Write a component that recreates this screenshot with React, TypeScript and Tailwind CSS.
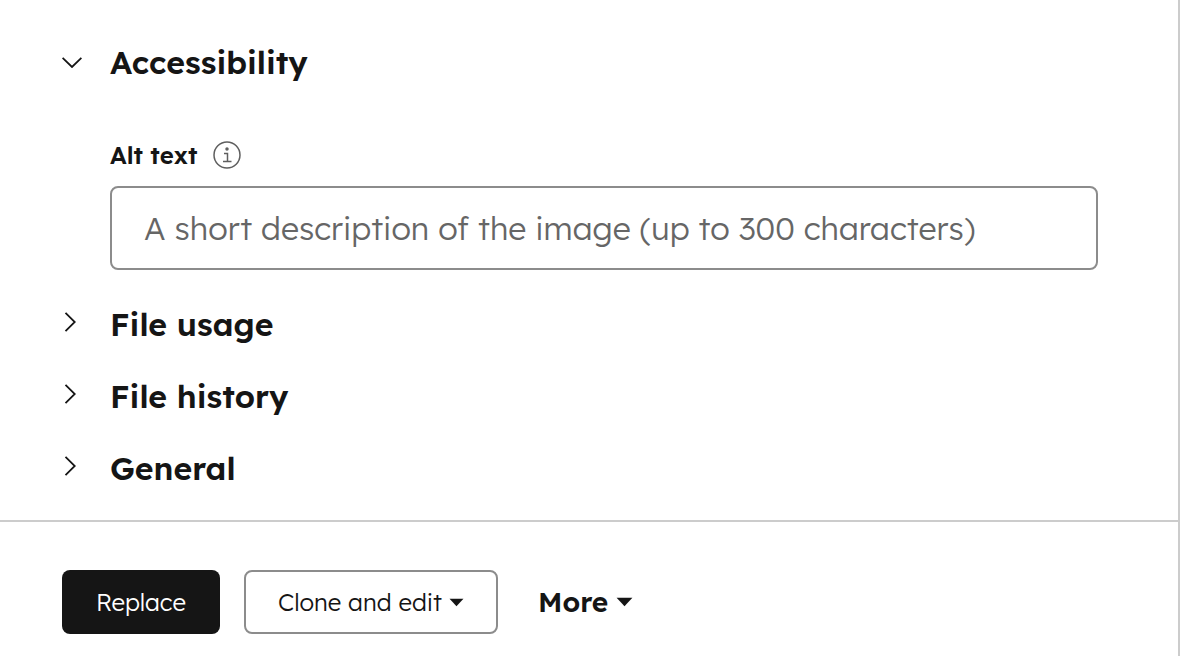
import React from "react";

const ChevronRight = () => (
  <svg width="12" height="20" viewBox="0 0 12 20" fill="none" stroke="#151515" strokeWidth="1.8" className="mb-[5px]">
    <path d="M1.5 0.8 L10.8 10 L1.5 19.2" />
  </svg>
);

const ChevronDown = () => (
  <svg width="20" height="11" viewBox="0 0 20 11" fill="none" stroke="#151515" strokeWidth="1.8">
    <path d="M0.6 0.8 L10 10 L19.4 0.8" />
  </svg>
);

const Caret = ({ w = 15, h = 9 }: { w?: number; h?: number }) => (
  <svg width={w} height={h} viewBox="0 0 14 8" fill="#151515">
    <path d="M0.5 0.5 H13.5 L7 7.5 Z" />
  </svg>
);

const Section = ({ label }: { label: string }) => (
  <div className="flex h-[72px] items-center">
    <div className="flex w-[48px] pl-[2px]">
      <ChevronRight />
    </div>
    <h3 className="text-[32px] font-semibold leading-none text-[#151515]">{label}</h3>
  </div>
);

export default function App() {
  return (
    <div className="flex h-[656px] w-[1180px] flex-col overflow-hidden border-r-2 border-[#cccccc] bg-white font-['Lexend','Inter',sans-serif]">
      <div className="flex h-[520px] flex-col pl-[62px] pr-[80px] pt-[26px]">
        <div className="flex h-[72px] items-center">
          <div className="flex w-[48px]">
            <ChevronDown />
          </div>
          <h3 className="text-[32px] font-semibold leading-none text-[#151515]">Accessibility</h3>
        </div>

        <div className="ml-[48px] mt-[40px] flex flex-col">
          <div className="flex h-[34px] items-center gap-[16px]">
            <label className="text-[24px] font-semibold text-[#151515]">Alt text</label>
            <svg width="28" height="28" viewBox="0 0 28 28" fill="none" stroke="#5f5f5f" strokeWidth="1.5">
              <circle cx="14" cy="14" r="13" />
              <path d="M11 12.5 H14.5 V20 M10 20.5 H18.5" />
              <circle cx="14" cy="8" r="1" fill="#5f5f5f" />
            </svg>
          </div>
          <input
            readOnly
            placeholder="A short description of the image (up to 300 characters)"
            className="mt-[14px] h-[84px] w-[988px] rounded-[8px] border-2 border-[#8c8c8c] px-[32px] text-[32px] font-light text-[#151515] placeholder:text-[#666666]"
          />
        </div>

        <div className="mt-[18px] flex flex-col">
          <Section label="File usage" />
          <Section label="File history" />
          <Section label="General" />
        </div>
      </div>

      <div className="flex flex-1 items-start gap-[24px] border-t-2 border-[#cccccc] pl-[62px] pt-[48px]">
        <button className="h-[64px] w-[158px] rounded-[8px] bg-[#151515] text-[24px] font-light text-white">
          Replace
        </button>
        <button className="flex h-[64px] w-[254px] items-center justify-center gap-[7px] rounded-[8px] border-2 border-[#8c8c8c] text-[24px] font-light text-[#151515]">
          Clone and edit
          <Caret />
        </button>
        <button className="ml-[16px] flex h-[64px] items-center gap-[8px] text-[28px] font-semibold text-[#151515]">
          More
          <Caret w={17} h={10} />
        </button>
      </div>
    </div>
  );
}
